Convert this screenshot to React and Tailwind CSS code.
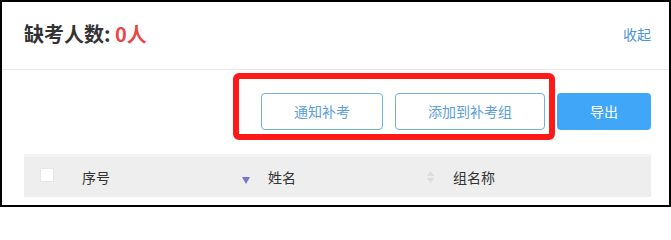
import React from "react";

function SortDesc() {
  return (
    <svg width="8" height="7" viewBox="0 0 8 7" className="mt-[6px]">
      <path d="M0 0 L8 0 L4 7 Z" fill="#7676d8" />
    </svg>
  );
}

function SortBoth() {
  return (
    <svg width="7" height="12" viewBox="0 0 7 12">
      <path d="M0 5 L7 5 L3.5 0 Z" fill="#dcdcdc" />
      <path d="M0 7 L7 7 L3.5 12 Z" fill="#dcdcdc" />
    </svg>
  );
}

export default function App() {
  const font = { fontFamily: '"Noto Sans CJK SC", "Noto Sans", sans-serif' };
  return (
    <div
      className="relative w-[671px] h-[207px] border-2 border-black bg-white overflow-hidden"
      style={font}
    >
      <div className="h-[68px] flex items-center justify-between pl-[22px] pr-[18px] pb-[3px] border-b border-[#e8e8e8]">
        <div className="text-[20px] font-bold text-[#333333] leading-none">
          缺考人数: <span className="text-[#e84848]">0人</span>
        </div>
        <div className="text-[14px] text-[#4a94d8] leading-none">收起</div>
      </div>

      <div className="flex justify-end gap-[12px] pr-[18px] mt-[23px]">
        <button className="w-[122px] h-[37px] rounded-[4px] border border-[#6fb0e8] bg-white text-[14px] text-[#5a9edb]">
          通知补考
        </button>
        <button className="w-[150px] h-[37px] rounded-[4px] border border-[#6fb0e8] bg-white text-[14px] text-[#5a9edb]">
          添加到补考组
        </button>
        <button className="w-[94px] h-[37px] rounded-[4px] bg-[#40a7f8] text-[14px] text-white">
          导出
        </button>
      </div>

      <div className="ml-[22px] mr-[18px] mt-[24px] h-[43px] bg-[#eeeeee] border-t-[3px] border-[#f4f4f4] flex items-center text-[14px] text-[#333333]">
        <div className="w-[58px] pl-[16px] flex items-center">
          <div className="w-[14px] h-[14px] bg-white border border-[#e6e6e6] mt-[-5px]" />
        </div>
        <div className="w-[186px] flex items-center pr-[18px]">
          <span>序号</span>
          <span className="flex-1" />
          <SortDesc />
        </div>
        <div className="w-[185px] flex items-center pr-[19px]">
          <span>姓名</span>
          <span className="flex-1" />
          <SortBoth />
        </div>
        <div className="flex items-center">
          <span>组名称</span>
        </div>
      </div>

      <div className="absolute left-[231px] top-[71px] w-[322px] h-[67px] border-[6px] border-[#ff1a1a] rounded-[6px] pointer-events-none" />
    </div>
  );
}
